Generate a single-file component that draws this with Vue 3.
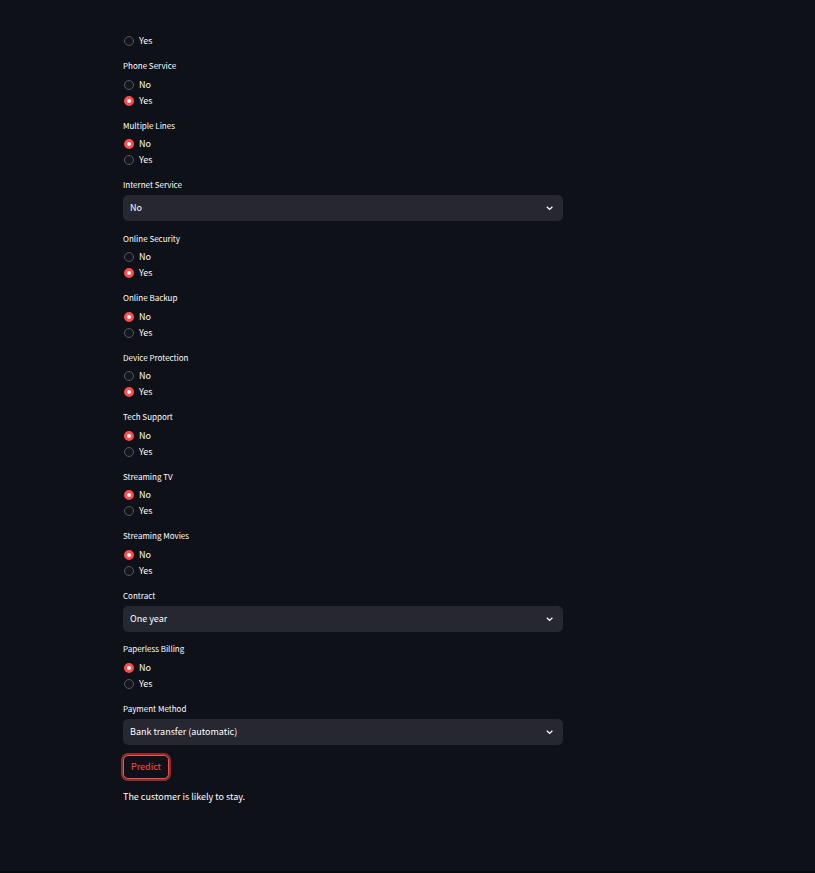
<script setup>
import { reactive, ref } from 'vue'

const yesNo = ['No', 'Yes']

const fields = reactive([
  { id: 'dependents', options: ['Yes'], value: '' },
  { id: 'phone-service', label: 'Phone Service', options: yesNo, value: 'Yes' },
  { id: 'multiple-lines', label: 'Multiple Lines', options: yesNo, value: 'No' },
  { id: 'internet-service', label: 'Internet Service', select: true, options: ['DSL', 'Fiber optic', 'No'], value: 'No' },
  { id: 'online-security', label: 'Online Security', options: yesNo, value: 'Yes' },
  { id: 'online-backup', label: 'Online Backup', options: yesNo, value: 'No' },
  { id: 'device-protection', label: 'Device Protection', options: yesNo, value: 'Yes' },
  { id: 'tech-support', label: 'Tech Support', options: yesNo, value: 'No' },
  { id: 'streaming-tv', label: 'Streaming TV', options: yesNo, value: 'No' },
  { id: 'streaming-movies', label: 'Streaming Movies', options: yesNo, value: 'No' },
  { id: 'contract', label: 'Contract', select: true, options: ['Month-to-month', 'One year', 'Two year'], value: 'One year' },
  { id: 'paperless-billing', label: 'Paperless Billing', options: yesNo, value: 'No' },
  {
    id: 'payment-method',
    label: 'Payment Method',
    select: true,
    options: ['Electronic check', 'Mailed check', 'Bank transfer (automatic)', 'Credit card (automatic)'],
    value: 'Bank transfer (automatic)'
  }
])

const result = ref('The customer is likely to stay.')
</script>

<template>
  <main class="page">
    <form class="form" @submit.prevent>
      <div class="fields">
        <div v-for="field in fields" :key="field.id" class="field">
          <template v-if="field.select">
            <label class="title" :for="field.id">{{ field.label }}</label>
            <div class="select-box">
              <select :id="field.id" v-model="field.value" class="select">
                <option v-for="option in field.options" :key="option" :value="option">{{ option }}</option>
              </select>
              <svg class="chevron" viewBox="0 0 10 10" aria-hidden="true">
                <path d="M1.8 3.8 L4.6 6.4 L7.4 3.8" />
              </svg>
            </div>
          </template>
          <template v-else>
            <span v-if="field.label" :id="field.id" class="title">{{ field.label }}</span>
            <div class="options" role="radiogroup" :aria-labelledby="field.label ? field.id : null">
              <label v-for="option in field.options" :key="option" class="option">
                <input v-model="field.value" class="radio" type="radio" :name="field.id" :value="option" />
                <span>{{ option }}</span>
              </label>
            </div>
          </template>
        </div>
      </div>
      <button class="predict" type="submit">Predict</button>
      <p class="result">{{ result }}</p>
    </form>
  </main>
</template>

<style>
body {
  background: #0e1117;
}
</style>

<style scoped>
.page {
  box-sizing: border-box;
  min-height: 100vh;
  padding: 33px 24px 24px 123px;
  border-bottom: 2px solid #07080d;
  background: #0e1117;
  color: #ffffff;
  font-family: "Noto Sans CJK SC", "Noto Sans", sans-serif;
  font-size: 9px;
  line-height: 16px;
}

.form {
  display: flex;
  flex-direction: column;
  align-items: flex-start;
  max-width: 440px;
}

.fields {
  width: 100%;
}

.field {
  display: flex;
  flex-direction: column;
  gap: 3px;
  margin-bottom: 10px;
}

.field:nth-child(even) .options {
  margin-top: 1px;
}

.field:nth-child(even) .select-box {
  margin-bottom: 1px;
}

.title {
  align-self: flex-start;
  font-size: 8px;
  line-height: 14px;
}

.options {
  display: flex;
  flex-direction: column;
  align-items: flex-start;
}

.option {
  display: flex;
  align-items: center;
  gap: 5px;
  height: 16px;
  padding-left: 1px;
}

.radio {
  appearance: none;
  box-sizing: border-box;
  width: 10px;
  height: 10px;
  margin: 0;
  border: 1px solid #55575d;
  border-radius: 50%;
  background: #13161d;
}

.radio:checked {
  border: 3px solid #ff4b4b;
  background: #ffffff;
}

.select-box {
  position: relative;
}

.select {
  appearance: none;
  display: block;
  box-sizing: border-box;
  width: 100%;
  height: 26px;
  margin: 0;
  padding: 0 24px 0 7px;
  border: 0;
  border-radius: 5px;
  background: #262730;
  color: inherit;
  font: inherit;
}

.chevron {
  position: absolute;
  top: 8px;
  right: 8px;
  width: 10px;
  height: 10px;
  fill: none;
  stroke: #fafafa;
  stroke-width: 1.4;
  pointer-events: none;
}

.predict {
  box-sizing: border-box;
  height: 24px;
  padding: 0 7px;
  border: 1px solid #ff4b4b;
  border-radius: 5px;
  background: #0e1117;
  box-shadow: 0 0 0 2px rgba(255, 75, 75, 0.5);
  color: #ff4b4b;
  font: inherit;
}

.result {
  margin: 10px 0 0;
}
</style>
